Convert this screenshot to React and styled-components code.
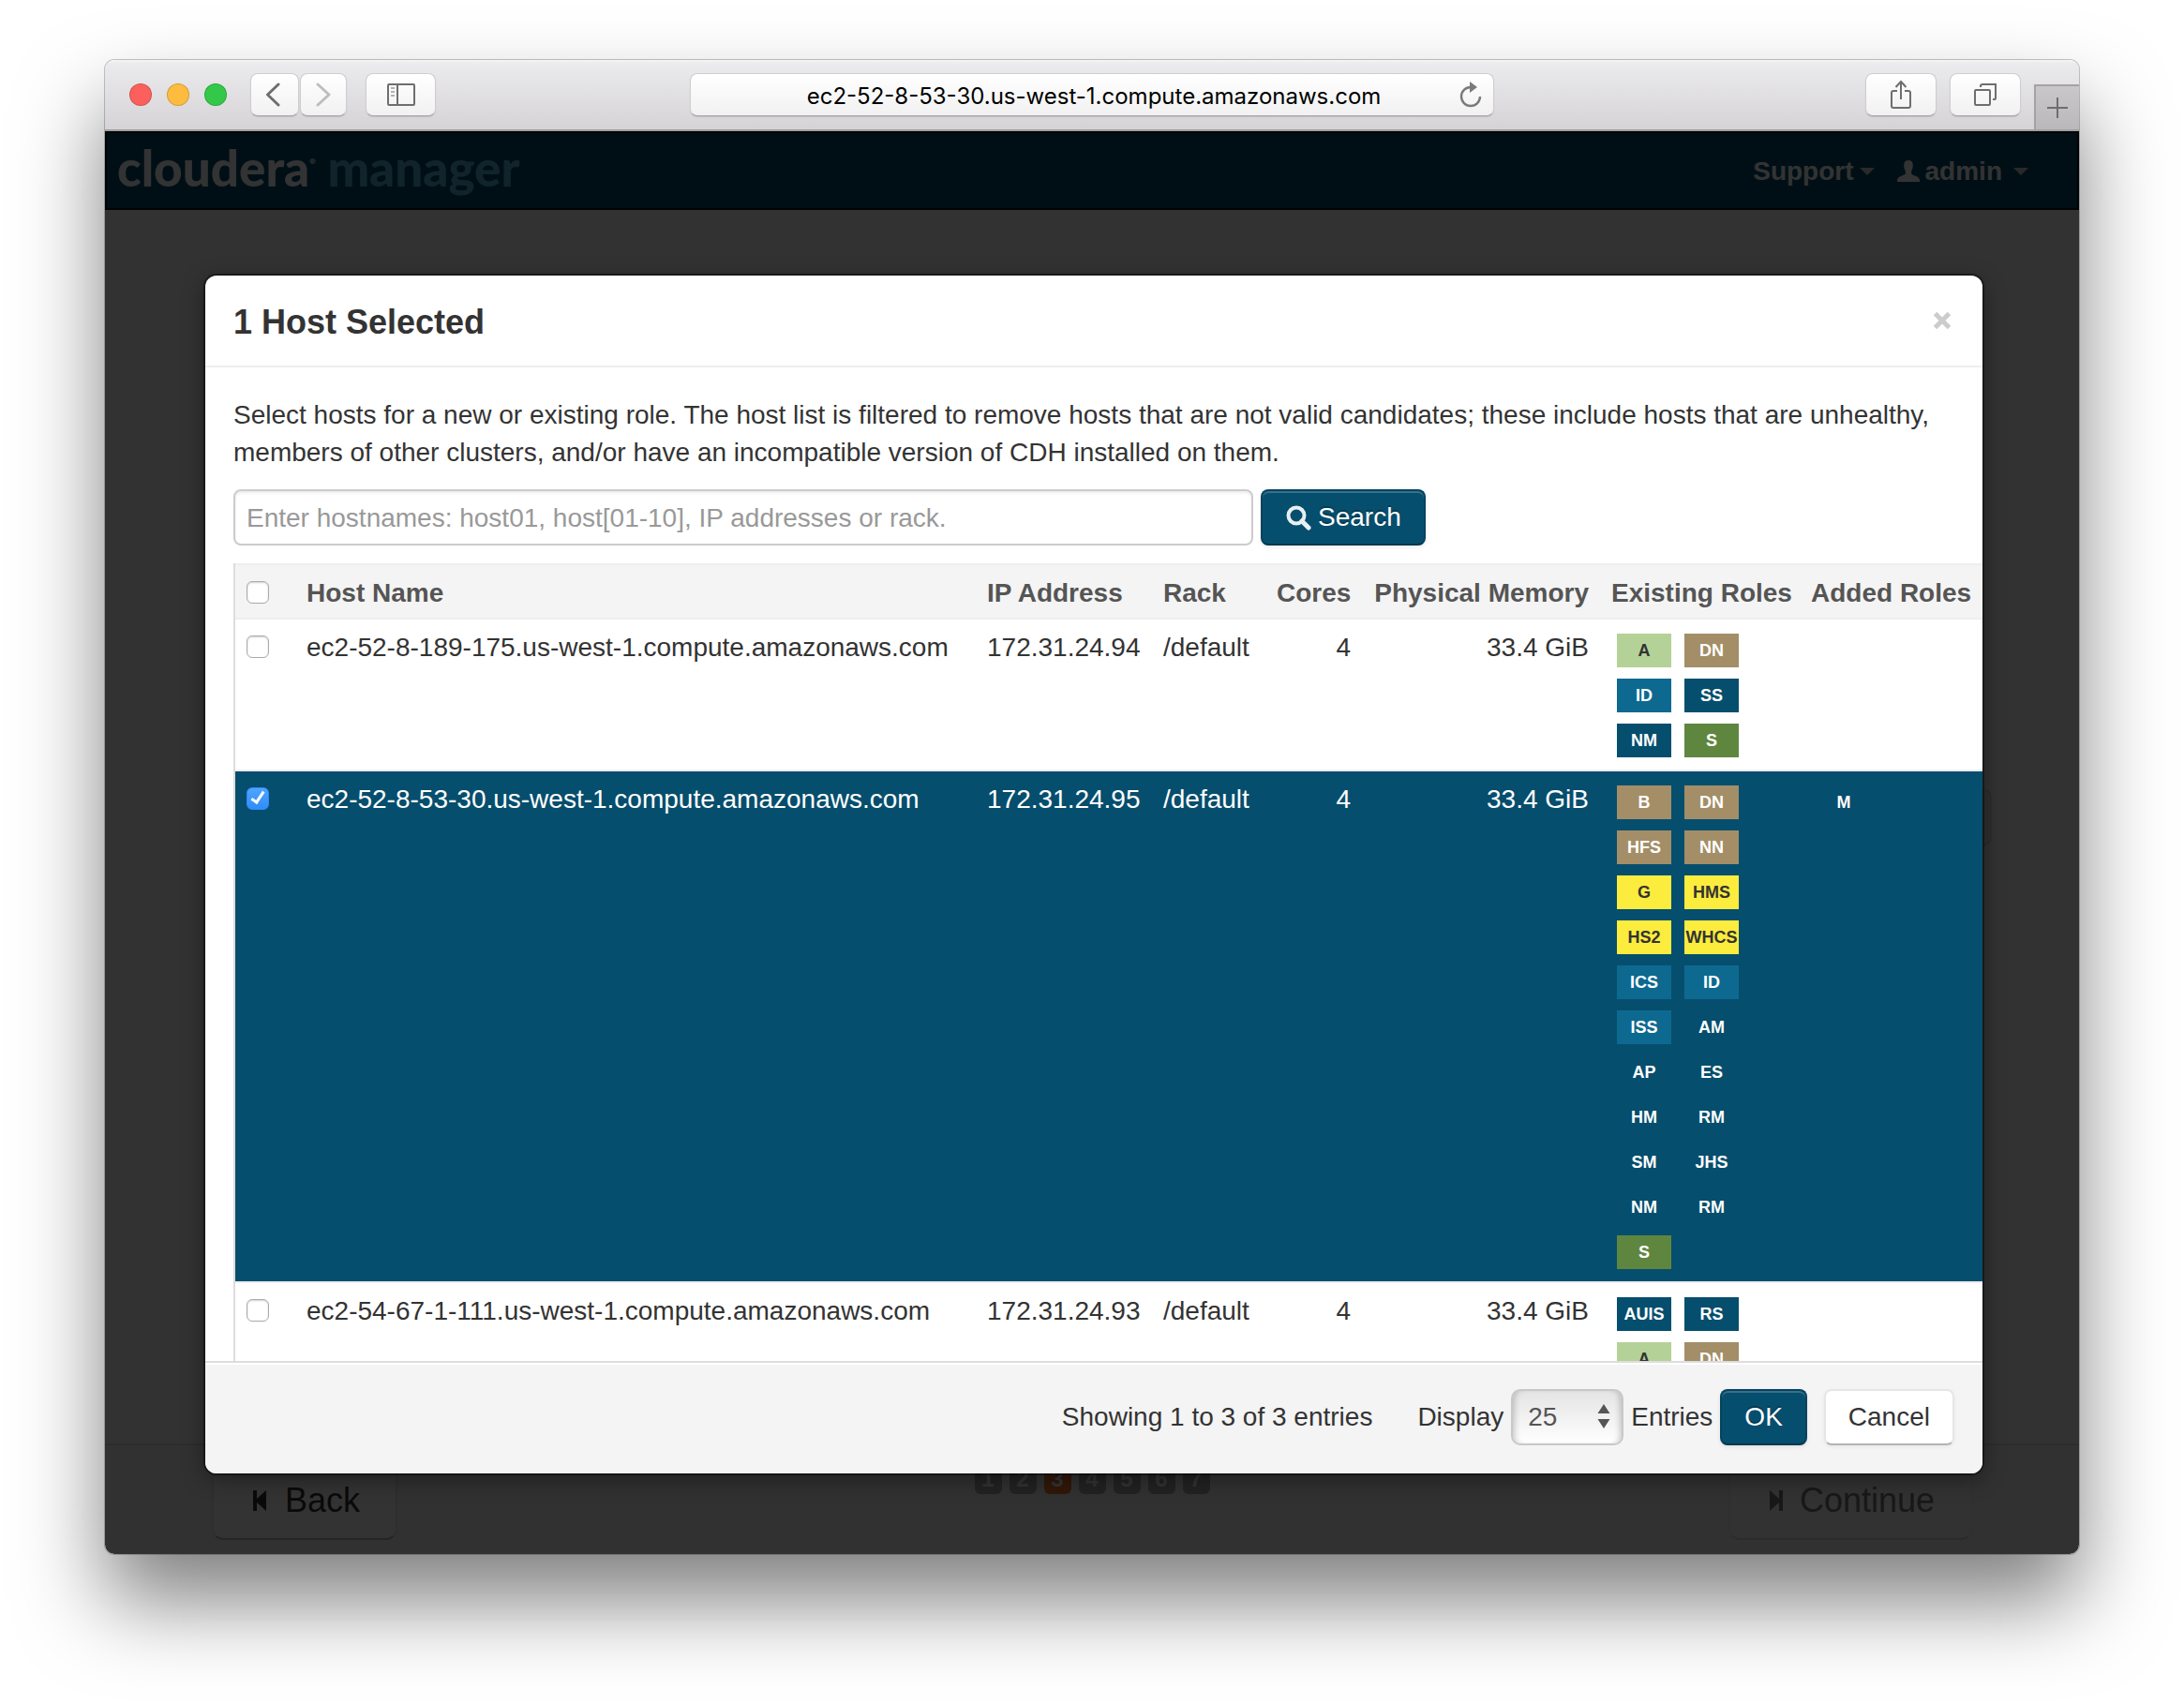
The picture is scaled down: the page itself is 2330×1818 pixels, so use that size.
import React, { useState } from "react";
import styled, { createGlobalStyle, css } from "styled-components";

const sans = `"Liberation Sans", Arial, sans-serif`;
const navy = "#064e6d";

const GlobalStyle = createGlobalStyle`
  *, *::before, *::after { box-sizing: border-box; }
  body {
    margin: 0;
    background: #fff;
    color: #333;
    font: 28px/40px ${sans};
  }
  button, input, select { font: inherit; color: inherit; margin: 0; }
  button { cursor: pointer; }
`;

/* ---------- browser window ---------- */

const Desktop = styled.div`
  height: 100vh;
  padding: 64px 112px 160px;
  overflow: hidden;
`;

const Window = styled.div`
  height: 100%;
  display: flex;
  flex-direction: column;
  border-radius: 10px;
  overflow: hidden;
  box-shadow: 0 0 0 1px rgba(0, 0, 0, 0.22), 0 50px 90px rgba(0, 0, 0, 0.5);
`;

const Toolbar = styled.header`
  flex: none;
  height: 76px;
  display: grid;
  grid-template-columns: 1fr minmax(0, 858px) 1fr;
  align-items: center;
  background: linear-gradient(#f6f5f6 0, #ebeaec 4px, #d5d3d6 100%);
  border-bottom: 2px solid #a09fa1;
`;

const ToolGroup = styled.div`
  display: flex;
  align-items: center;
  height: 100%;
  gap: ${(p) => p.$gap}px;
  justify-content: ${(p) => (p.$end ? "flex-end" : "flex-start")};
  padding-left: ${(p) => p.$indent || 0}px;
`;

const Light = styled.button`
  width: 24px;
  height: 24px;
  padding: 0;
  border-radius: 50%;
  border: 1px solid rgba(0, 0, 0, 0.16);
  background: ${(p) => p.$color};
`;

const raised = css`
  border: 1px solid #cfcdd0;
  border-bottom-color: #a8a6a9;
  border-radius: 8px;
  background: linear-gradient(#fff, #f1f1f1);
  box-shadow: 0 1px 1px rgba(0, 0, 0, 0.12);
`;

const ToolButton = styled.button`
  ${raised}
  width: ${(p) => p.$width}px;
  height: 46px;
  padding: 0;
  display: flex;
  align-items: center;
  justify-content: center;
`;

const Pair = styled.div`
  display: flex;
  gap: 1px;
  margin: 0 20px 0 9px;
`;

const AddressBar = styled.div`
  position: relative;
`;

const Address = styled.input`
  ${raised}
  display: block;
  width: 100%;
  height: 46px;
  padding: 2px 40px 0 44px;
  color: #000;
  font: 24px/30px Inter, Roboto, sans-serif;
  text-align: center;
`;

const Reload = styled.button`
  position: absolute;
  right: 12px;
  top: 8px;
  width: 26px;
  height: 28px;
  padding: 0;
  border: 0;
  background: none;
`;

const NewTab = styled.button`
  align-self: flex-end;
  width: 48px;
  height: 48px;
  padding: 0;
  border: solid #a3a2a4;
  border-width: 2px 0 0 2px;
  background: linear-gradient(#c9c7ca, #bab8bb);
  display: flex;
  align-items: center;
  justify-content: center;
`;

/* ---------- page behind the dialog ---------- */

const Viewport = styled.div`
  flex: 1;
  min-height: 0;
  position: relative;
  display: flex;
  flex-direction: column;
  background: #fbfbfb;
`;

const NavBar = styled.nav`
  flex: none;
  height: 84px;
  padding: 2px 52px 0 11px;
  display: flex;
  align-items: center;
  justify-content: space-between;
  background: #004b6e;
  border: 2px solid #001018;
  color: #fff;
`;

const Brand = styled.a`
  font: 900 53px/56px Lato, sans-serif;
  color: #fff;
  text-decoration: none;
  padding-bottom: 8px;
`;

const BrandMark = styled.sup`
  font-size: 8px;
  line-height: 8px;
  vertical-align: 24px;
`;

const BrandProduct = styled.span`
  color: #5ab4d8;
`;

const NavLinks = styled.div`
  display: flex;
  gap: 24px;
`;

const NavLink = styled.a`
  display: flex;
  align-items: center;
  gap: 6px;
  font-weight: 700;
  color: #fff;
  text-decoration: none;
`;

const Caret = styled.span`
  border: 8px solid transparent;
  border-top-color: #ccc;
  border-bottom: 0;
  margin-left: ${(p) => p.$space || 0}px;
`;

const Main = styled.main`
  flex: 1;
  padding: 618px 93px 0;
`;

const FieldBox = styled.div`
  margin-left: auto;
  width: 240px;
  height: 60px;
  border: 2px solid #dcdcdc;
  border-radius: 8px;
  background: #eaeaea;
`;

const Wizard = styled.footer`
  flex: none;
  height: 118px;
  padding: 16px 114px 0 114px;
  display: flex;
  align-items: flex-start;
  justify-content: space-between;
  background: #f5f5f5;
  border-top: 2px solid #ddd;
`;

const WizardSide = styled.div`
  flex: 1;
  display: flex;
  justify-content: ${(p) => (p.$end ? "flex-end" : "flex-start")};
`;

const WizardButton = styled.button`
  height: 85px;
  padding: 0 38px;
  display: flex;
  align-items: center;
  gap: 16px;
  font-size: 36px;
  line-height: 44px;
  color: ${(p) => (p.$muted ? "#777" : "#333")};
  border: 2px solid ${(p) => (p.$muted ? "#ededed" : "#e6e6e6")};
  border-bottom-color: ${(p) => (p.$muted ? "#d8d8d8" : "#b8b8b8")};
  border-radius: 12px;
  background: ${(p) => (p.$muted ? "#f8f8f8" : "#fff")};
`;

const Steps = styled.ol`
  display: flex;
  gap: 8px;
  margin: 7px 0 0;
  padding: 0;
  list-style: none;
`;

const Step = styled.li`
  width: 29px;
  height: 29px;
  border-radius: 6px;
  text-align: center;
  font-weight: 700;
  font-size: 24px;
  line-height: 26px;
  color: #fff;
  background: ${(p) => (p.$current ? "#f47a2a" : "#a8a8a8")};
`;

/* ---------- dialog ---------- */

const Backdrop = styled.div`
  position: absolute;
  inset: 0;
  padding: 154px 103px 86px 107px;
  background: rgba(0, 0, 0, 0.8);
`;

const Dialog = styled.section`
  height: 100%;
  display: flex;
  flex-direction: column;
  border-radius: 12px;
  overflow: hidden;
  background: #fff;
  box-shadow: 0 0 0 2px rgba(0, 0, 0, 0.4), 0 6px 24px rgba(0, 0, 0, 0.4);
`;

const DialogHeader = styled.header`
  flex: none;
  height: 98px;
  padding: 3px 30px 0;
  display: flex;
  align-items: center;
  justify-content: space-between;
  border-bottom: 2px solid #eee;
`;

const DialogTitle = styled.h3`
  margin: 0;
  font-size: 36px;
  line-height: 40px;
`;

const CloseButton = styled.button`
  padding: 0 4px 3px;
  border: 0;
  background: none;
  display: flex;
`;

const DialogBody = styled.div`
  flex: 1;
  min-height: 0;
  overflow: hidden;
  padding: 31px 0 0 30px;
`;

const Intro = styled.p`
  margin: 0 30px 19px 0;
`;

const SearchRow = styled.form`
  display: flex;
  gap: 8px;
  margin-bottom: 19px;
`;

const HostInput = styled.input`
  max-width: 1088px;
  flex: 1;
  height: 60px;
  padding: 1px 12px 0;
  border: 2px solid #ccc;
  border-radius: 8px;
  background: #fff;
  box-shadow: inset 0 2px 3px rgba(0, 0, 0, 0.08);
  &::placeholder { color: #999; opacity: 1; }
`;

const ActionButton = styled.button`
  height: 60px;
  padding: 0 24px;
  display: flex;
  align-items: center;
  gap: 7px;
  border-radius: 8px;
  ${(p) =>
    p.$primary
      ? css`
          color: #fff;
          background: ${navy};
          border: 2px solid #05435f;
          border-bottom-color: #03374d;
          text-shadow: 0 -2px 0 rgba(0, 0, 0, 0.25);
          box-shadow: inset 0 2px 0 rgba(255, 255, 255, 0.2), 0 2px 4px rgba(0, 0, 0, 0.08);
        `
      : css`
          background: #fff;
          border: 2px solid #e6e6e6;
          border-bottom-color: #b3b3b3;
          box-shadow: 0 2px 4px rgba(0, 0, 0, 0.05);
        `}
`;

const HostTable = styled.table`
  width: 100%;
  table-layout: fixed;
  border-collapse: separate;
  border-spacing: 0;
  border-left: 2px solid #ddd;
`;

const Col = styled.col`
  width: ${(p) => (p.$width ? p.$width + "px" : "auto")};
`;

const cell = css`
  padding: 10px 12px 6px;
  border-top: 2px solid #eee;
  vertical-align: top;
  white-space: nowrap;
  text-align: ${(p) => (p.$right ? "right" : "left")};
`;

const HeadCell = styled.th`
  ${cell}
  background: #f4f4f4;
  color: #555;
`;

const Row = styled.tr`
  color: ${(p) => (p.$selected ? "#fff" : "#333")};
  background: ${(p) => (p.$selected ? navy : "#fff")};
`;

const Cell = styled.td`
  ${cell}
`;

const Check = styled.input`
  appearance: none;
  display: block;
  width: 24px;
  height: 24px;
  margin: 7px 0 9px;
  border: 1px solid #aaa;
  border-radius: 6px;
  background: #fff;
  box-shadow: inset 0 1px 2px rgba(0, 0, 0, 0.18);
  &:checked {
    border-color: #2f8bf5;
    background: linear-gradient(#4ea5fd, #2f8dfb);
    box-shadow: none;
  }
  &:checked::before {
    content: "";
    display: block;
    width: 8px;
    height: 15px;
    margin: 1px 0 0 7px;
    border: solid #fff;
    border-width: 0 3px 3px 0;
    transform: rotate(34deg);
  }
`;

const RoleGrid = styled.div`
  display: grid;
  grid-template-columns: repeat(2, 58px);
  gap: 12px 14px;
  padding: 5px 6px 7px;
`;

const tones = {
  sage: ["#b4d297", "#333"],
  tan: ["#a38e68", "#fff"],
  blue: ["#0d6990", "#fff"],
  navy: [navy, "#fff"],
  green: ["#5f863f", "#fff"],
  yellow: ["#fbec3d", "#333"],
};

const Role = styled.span`
  height: 36px;
  line-height: 36px;
  font-size: 18px;
  font-weight: 700;
  display: flex;
  justify-content: center;
  background: ${(p) => tones[p.$tone][0]};
  color: ${(p) => tones[p.$tone][1]};
`;

const DialogFooter = styled.footer`
  flex: none;
  height: 120px;
  padding: 0 30px 2px;
  display: flex;
  align-items: center;
  justify-content: flex-end;
  gap: 8px;
  background: #f4f4f4;
  border-top: 2px solid #ddd;
  box-shadow: inset 0 2px 0 #fff;
`;

const Showing = styled.span`
  margin-right: 40px;
`;

const SelectBox = styled.div`
  position: relative;
`;

const PageSize = styled.select`
  appearance: none;
  display: block;
  width: 120px;
  height: 60px;
  padding: 0 16px;
  color: #555;
  border: 2px solid #c8c8c8;
  border-radius: 10px;
  background: linear-gradient(#e4e4e4, #fff);
  box-shadow: inset 6px 0 6px -4px rgba(0, 0, 0, 0.2), inset -6px 0 6px -4px rgba(0, 0, 0, 0.2);
`;

const SelectArrows = styled.svg`
  position: absolute;
  right: 14px;
  top: 16px;
  pointer-events: none;
`;

const Buttons = styled.div`
  display: flex;
  gap: 18px;
`;

/* ---------- data ---------- */

const hosts = [
  {
    name: "ec2-52-8-189-175.us-west-1.compute.amazonaws.com",
    ip: "172.31.24.94",
    roles: [["A", "sage"], ["DN", "tan"], ["ID", "blue"], ["SS", "navy"], ["NM", "navy"], ["S", "green"]],
    added: [],
  },
  {
    name: "ec2-52-8-53-30.us-west-1.compute.amazonaws.com",
    ip: "172.31.24.95",
    roles: [
      ["B", "tan"], ["DN", "tan"], ["HFS", "tan"], ["NN", "tan"],
      ["G", "yellow"], ["HMS", "yellow"], ["HS2", "yellow"], ["WHCS", "yellow"],
      ["ICS", "blue"], ["ID", "blue"], ["ISS", "blue"], ["AM", "navy"],
      ["AP", "navy"], ["ES", "navy"], ["HM", "navy"], ["RM", "navy"],
      ["SM", "navy"], ["JHS", "navy"], ["NM", "navy"], ["RM", "navy"],
      ["S", "green"],
    ],
    added: [["M", "navy"]],
  },
  {
    name: "ec2-54-67-1-111.us-west-1.compute.amazonaws.com",
    ip: "172.31.24.93",
    roles: [["AUIS", "navy"], ["RS", "navy"], ["A", "sage"], ["DN", "tan"]],
    added: [],
  },
];

const Roles = ({ items }) =>
  items.length ? (
    <RoleGrid>
      {items.map(([label, tone], i) => (
        <Role key={i} $tone={tone}>{label}</Role>
      ))}
    </RoleGrid>
  ) : null;

/* ---------- icons ---------- */

const line = { fill: "none", stroke: "#6e6e6e", strokeWidth: 2 };

const Chevron = ({ color, flip }) => (
  <svg width="18" height="26" viewBox="0 0 18 26" fill="none" stroke={color} strokeWidth="3" strokeLinecap="round" strokeLinejoin="round">
    <path d={flip ? "M3 2 L15 13 L3 24" : "M13 2 L1.500 13 L13 24"} />
  </svg>
);

const SidebarIcon = () => (
  <svg width="30" height="24" viewBox="0 0 30 24" {...line}>
    <rect x="1" y="1" width="28" height="22" rx="1" />
    <path d="M11 1V23" />
    <path d="M4 5H8M4 9H8M4 13H8" strokeWidth="1.6" stroke="#999" />
  </svg>
);

const ShareIcon = () => (
  <svg width="24" height="32" viewBox="0 0 24 32" {...line}>
    <path d="M8 12H4Q2 12 2 14V28Q2 30 4 30H20Q22 30 22 28V14Q22 12 20 12H16" />
    <path d="M12 21V2M6.500 8L12 2L17.500 8" />
  </svg>
);

const TabsIcon = () => (
  <svg width="26" height="26" viewBox="0 0 26 26" {...line}>
    <rect x="2" y="8" width="16" height="16" rx="1" />
    <path d="M8 5V4Q8 2 10 2H24V17Q24 18 23 18H21" />
  </svg>
);

const UserIcon = () => (
  <svg width="24" height="24" viewBox="0 0 24 24" fill="#fff">
    <path d="M12 0C15.500 0 17 2.500 16.800 6C16.600 9 15.500 10.500 15.200 12V14.500C15.500 16 24 17 24 21V23H0V21C0 17 8.500 16 8.800 14.500V12C8.500 10.500 7.400 9 7.200 6C7 2.500 8.500 0 12 0Z" />
  </svg>
);

export default function App() {
  const [selected, setSelected] = useState([1]);
  const toggle = (i) =>
    setSelected((s) => (s.includes(i) ? s.filter((x) => x !== i) : [...s, i]));

  return (
    <>
      <GlobalStyle />
      <Desktop>
        <Window>
          <Toolbar>
            <ToolGroup $gap={16} $indent={26}>
              <Light $color="#fc605c" aria-label="Close window" />
              <Light $color="#fdbc40" aria-label="Minimize window" />
              <Light $color="#34c84a" aria-label="Zoom window" />
              <ToolGroup $gap={0}>
                <Pair>
                  <ToolButton $width={52} aria-label="Back"><Chevron color="#6e6e6e" /></ToolButton>
                  <ToolButton $width={50} aria-label="Forward"><Chevron color="#bdbdbd" flip /></ToolButton>
                </Pair>
                <ToolButton $width={75} aria-label="Sidebar"><SidebarIcon /></ToolButton>
              </ToolGroup>
            </ToolGroup>
            <AddressBar>
              <Address aria-label="Address" defaultValue="ec2-52-8-53-30.us-west-1.compute.amazonaws.com" />
              <Reload aria-label="Reload">
                <svg width="26" height="28" viewBox="0 0 26 28">
                  <path d="M13 6A10 10 0 1 0 23 16" fill="none" stroke="#7a7a7a" strokeWidth="2.400" />
                  <path d="M12 0L20 6L12 12Z" fill="#7a7a7a" />
                </svg>
              </Reload>
            </AddressBar>
            <ToolGroup $gap={14} $end>
              <ToolButton $width={76} aria-label="Share"><ShareIcon /></ToolButton>
              <ToolButton $width={76} aria-label="Show tabs"><TabsIcon /></ToolButton>
              <NewTab aria-label="New tab">
                <svg width="22" height="22" viewBox="0 0 22 22" {...line}><path d="M11 0V22M0 11H22" /></svg>
              </NewTab>
            </ToolGroup>
          </Toolbar>

          <Viewport>
            <NavBar>
              <Brand href="#">
                cloudera<BrandMark>®</BrandMark> <BrandProduct>manager</BrandProduct>
              </Brand>
              <NavLinks>
                <NavLink href="#">Support<Caret /></NavLink>
                <NavLink href="#"><UserIcon />admin<Caret $space={6} /></NavLink>
              </NavLinks>
            </NavBar>
            <Main><FieldBox /></Main>
            <Wizard>
              <WizardSide>
                <WizardButton>
                  <svg width="22" height="24" viewBox="0 0 22 24" fill="currentColor"><path d="M4 1H8V10L18 1V23L8 14V23H4Z" /></svg>
                  Back
                </WizardButton>
              </WizardSide>
              <Steps>
                {[1, 2, 3, 4, 5, 6, 7].map((n) => <Step key={n} $current={n === 3}>{n}</Step>)}
              </Steps>
              <WizardSide $end>
                <WizardButton $muted>
                  <svg width="20" height="24" viewBox="0 0 20 24" fill="currentColor"><path d="M4 1L14 10V1H18V23H14V14L4 23Z" /></svg>
                  Continue
                </WizardButton>
              </WizardSide>
            </Wizard>

            <Backdrop>
              <Dialog role="dialog" aria-labelledby="dialog-title">
                <DialogHeader>
                  <DialogTitle id="dialog-title">
                    {selected.length} Host{selected.length === 1 ? "" : "s"} Selected
                  </DialogTitle>
                  <CloseButton aria-label="Close">
                    <svg width="18" height="18" viewBox="0 0 18 18" stroke="#ccc" strokeWidth="5"><path d="M1.500 1.500L16.500 16.500M16.500 1.500L1.500 16.500" /></svg>
                  </CloseButton>
                </DialogHeader>

                <DialogBody>
                  <Intro>
                    Select hosts for a new or existing role. The host list is filtered to remove hosts that are not valid
                    candidates; these include hosts that are unhealthy, members of other clusters, and/or have an
                    incompatible version of CDH installed on them.
                  </Intro>
                  <SearchRow onSubmit={(e) => e.preventDefault()}>
                    <HostInput aria-label="Hostnames" placeholder="Enter hostnames: host01, host[01-10], IP addresses or rack." />
                    <ActionButton $primary>
                      <svg width="28" height="28" viewBox="0 0 28 28" fill="none" stroke="#e8eff3">
                        <circle cx="12" cy="12" r="8.500" strokeWidth="4" />
                        <path d="M18 18L25 25" strokeWidth="5" strokeLinecap="round" />
                      </svg>
                      Search
                    </ActionButton>
                  </SearchRow>
                  <HostTable>
                    <colgroup>
                      <Col $width={64} /><Col /><Col $width={188} /><Col $width={121} />
                      <Col $width={103} /><Col $width={254} /><Col $width={213} /><Col $width={195} />
                    </colgroup>
                    <thead>
                      <tr>
                        <HeadCell>
                          <Check
                            type="checkbox"
                            aria-label="Select all hosts"
                            checked={selected.length === hosts.length}
                            onChange={(e) => setSelected(e.target.checked ? hosts.map((_, i) => i) : [])}
                          />
                        </HeadCell>
                        <HeadCell>Host Name</HeadCell>
                        <HeadCell>IP Address</HeadCell>
                        <HeadCell>Rack</HeadCell>
                        <HeadCell $right>Cores</HeadCell>
                        <HeadCell $right>Physical Memory</HeadCell>
                        <HeadCell>Existing Roles</HeadCell>
                        <HeadCell>Added Roles</HeadCell>
                      </tr>
                    </thead>
                    <tbody>
                      {hosts.map((h, i) => (
                        <Row key={h.ip} $selected={selected.includes(i)}>
                          <Cell>
                            <Check
                              type="checkbox"
                              aria-label={h.name}
                              checked={selected.includes(i)}
                              onChange={() => toggle(i)}
                            />
                          </Cell>
                          <Cell>{h.name}</Cell>
                          <Cell>{h.ip}</Cell>
                          <Cell>/default</Cell>
                          <Cell $right>4</Cell>
                          <Cell $right>33.4 GiB</Cell>
                          <Cell><Roles items={h.roles} /></Cell>
                          <Cell><Roles items={h.added} /></Cell>
                        </Row>
                      ))}
                    </tbody>
                  </HostTable>
                </DialogBody>

                <DialogFooter>
                  <Showing>Showing 1 to 3 of 3 entries</Showing>
                  <label htmlFor="page-size">Display</label>
                  <SelectBox>
                    <PageSize id="page-size" defaultValue="25">
                      <option>25</option>
                      <option>50</option>
                      <option>100</option>
                    </PageSize>
                    <SelectArrows width="14" height="26" viewBox="0 0 14 26" fill="#555">
                      <path d="M7 0L13.500 10H0.500ZM7 26L13.500 16H0.500Z" />
                    </SelectArrows>
                  </SelectBox>
                  <span>Entries</span>
                  <Buttons>
                    <ActionButton $primary>OK</ActionButton>
                    <ActionButton>Cancel</ActionButton>
                  </Buttons>
                </DialogFooter>
              </Dialog>
            </Backdrop>
          </Viewport>
        </Window>
      </Desktop>
    </>
  );
}
